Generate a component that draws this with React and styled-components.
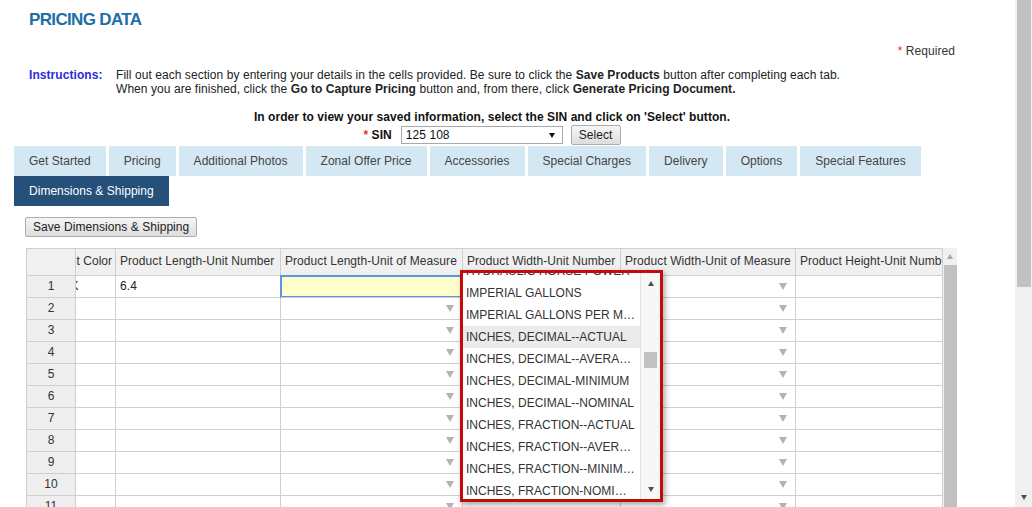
import React, { useLayoutEffect, useRef } from 'react'
import styled, { createGlobalStyle } from 'styled-components'

const GlobalStyle = createGlobalStyle`
  html, body {
    margin: 0;
    padding: 0;
    overflow: hidden;
  }
  body {
    font-family: 'Liberation Sans', Arial, sans-serif;
    font-size: 12px;
    letter-spacing: 0.06px;
    color: #222;
    background: #fff;
  }
  * { box-sizing: border-box; }
`

const tabs = [
  'Get Started',
  'Pricing',
  'Additional Photos',
  'Zonal Offer Price',
  'Accessories',
  'Special Charges',
  'Delivery',
  'Options',
  'Special Features',
  'Dimensions & Shipping',
]

const units = [
  'HYDRAULIC HORSE POWER',
  'IMPERIAL GALLONS',
  'IMPERIAL GALLONS PER MINUTE',
  'INCHES, DECIMAL--ACTUAL',
  'INCHES, DECIMAL--AVERAGE',
  'INCHES, DECIMAL-MINIMUM',
  'INCHES, DECIMAL--NOMINAL',
  'INCHES, FRACTION--ACTUAL',
  'INCHES, FRACTION--AVERAGE',
  'INCHES, FRACTION--MINIMUM',
  'INCHES, FRACTION-NOMINAL',
  'KILOGRAMS',
]

const rows = [
  { color: 'BLACK', length: '6.4' },
  ...Array.from({ length: 11 }, () => ({ color: '', length: '' })),
]

function App() {
  const listRef = useRef(null)

  // the unit list is opened scrolled a little way down
  useLayoutEffect(() => {
    if (listRef.current) listRef.current.scrollTop = 13
  }, [])

  return (
    <>
      <GlobalStyle />
      <Page>
        <Main>
          <Title>PRICING DATA</Title>
          <Required><Star>*</Star> Required</Required>

          <Instructions>
            <Label>Instructions:</Label>
            <div>
              Fill out each section by entering your details in the cells provided. Be sure to click the <b>Save Products</b> button after completing each tab.
              <br />
              When you are finished, click the <b>Go to Capture Pricing</b> button and, from there, click <b>Generate Pricing Document.</b>
            </div>
          </Instructions>

          <Notice>In order to view your saved information, select the SIN and click on 'Select' button.</Notice>
          <SinRow>
            <SinLabel><Star>*</Star> SIN</SinLabel>
            <FakeSelect>
              <span>125 108</span>
              <Caret $color="#111" />
            </FakeSelect>
            <Button>Select</Button>
          </SinRow>

          <Tabs>
            {tabs.map((t) => (
              <Tab key={t} $active={t === 'Dimensions & Shipping'}>{t}</Tab>
            ))}
          </Tabs>

          <SaveButton>Save Dimensions &amp; Shipping</SaveButton>

          <GridWrap>
            <Table>
              <HeadCell $corner />
              <HeadCell><Clip $offset={42}>Product Color</Clip></HeadCell>
              <HeadCell>Product Length-Unit Number</HeadCell>
              <HeadCell>Product Length-Unit of Measure</HeadCell>
              <HeadCell>Product Width-Unit Number</HeadCell>
              <HeadCell>Product Width-Unit of Measure</HeadCell>
              <HeadCell>Product Height-Unit Number</HeadCell>

              {rows.map((r, i) => (
                <React.Fragment key={i}>
                  <RowHead>{i + 1}</RowHead>
                  <Cell><Clip $offset={41}>{r.color}</Clip></Cell>
                  <Cell>{r.length}</Cell>
                  {i === 0 ? (
                    <Cell $selected />
                  ) : (
                    <UomCell><Caret $big $color="#b3b3b3" /></UomCell>
                  )}
                  <Cell />
                  <UomCell><Caret $big $color="#b3b3b3" /></UomCell>
                  <Cell />
                </React.Fragment>
              ))}
            </Table>

            <GridScroll>
              <GridScrollHead><Caret $up $color="#a8a8a8" /></GridScrollHead>
              <GridThumb />
            </GridScroll>

            <Dropdown>
              <OptionList ref={listRef}>
                {units.map((u) => (
                  <Option key={u} $hover={u === 'INCHES, DECIMAL--ACTUAL'}>{u}</Option>
                ))}
              </OptionList>
              <ListScroll>
                <ScrollButton><Caret $up $color="#505050" /></ScrollButton>
                <ListTrack>
                  <ListThumb />
                </ListTrack>
                <ScrollButton><Caret $color="#505050" /></ScrollButton>
              </ListScroll>
            </Dropdown>
          </GridWrap>
        </Main>

        <PageScroll>
          <PageThumb />
          <PageTrackRest />
          <PageArrow><Caret $color="#505050" /></PageArrow>
        </PageScroll>
      </Page>
    </>
  )
}

export default App

const Page = styled.div`
  display: flex;
  height: 100vh;
  overflow: hidden;
`

const Main = styled.main`
  flex: 1;
  min-width: 0;
  padding: 0 45px 0 14px;
  overflow: hidden;
`

const Title = styled.h1`
  margin: 10px 0 0 15px;
  font-size: 17px;
  line-height: 20px;
  letter-spacing: -0.65px;
  font-weight: bold;
  color: #1d6fa5;
`

const Star = styled.span`
  color: #e63030;
`

const Required = styled.div`
  margin-top: 14px;
  padding-right: 15px;
  text-align: right;
  line-height: 14px;
  color: #333;
`

const Instructions = styled.div`
  display: grid;
  grid-template-columns: 87px 1fr;
  margin-top: 10px;
  padding-left: 15px;
  line-height: 14px;
  color: #222;
`

const Label = styled.div`
  font-weight: bold;
  color: #2b2bd9;
`

const Notice = styled.div`
  margin-top: 14px;
  text-align: center;
  font-weight: bold;
  line-height: 14px;
  color: #111;
`

const SinRow = styled.div`
  display: flex;
  justify-content: center;
  align-items: center;
  height: 20px;
  margin-top: 1px;
`

const SinLabel = styled.span`
  font-weight: bold;
  margin-right: 9px;
  color: #111;
`

const FakeSelect = styled.div`
  display: flex;
  align-items: center;
  justify-content: space-between;
  width: 162px;
  height: 18px;
  padding: 0 7px 0 4px;
  border: 1px solid #a9a9a9;
  background: #fff;
  color: #111;
  margin-right: 8px;
`

const Button = styled.button`
  height: 20px;
  padding: 0 7px;
  font-family: inherit;
  font-size: 12px;
  letter-spacing: 0.06px;
  color: #222;
  border: 1px solid #adadad;
  border-radius: 2px;
  background: linear-gradient(#f6f6f6, #dddddd);
`

const Caret = styled.span`
  display: inline-block;
  width: 0;
  height: 0;
  border-left: ${(p) => (p.$big ? 4 : 3.5)}px solid transparent;
  border-right: ${(p) => (p.$big ? 4 : 3.5)}px solid transparent;
  ${(p) =>
    p.$up
      ? `border-bottom: 5px solid ${p.$color};`
      : `border-top: ${p.$big ? 7 : 5}px solid ${p.$color};`}
`

const Tabs = styled.div`
  display: flex;
  flex-wrap: wrap;
  column-gap: 3px;
  margin-top: 1px;
`

const Tab = styled.div`
  height: 30px;
  line-height: 30px;
  padding: 0 15px;
  white-space: nowrap;
  letter-spacing: 0.03px;
  background: ${(p) => (p.$active ? '#24507a' : '#d4e8f4')};
  color: ${(p) => (p.$active ? '#fff' : '#444')};
`

const SaveButton = styled(Button)`
  display: block;
  margin: 11px 0 0 11px;
`

const GridWrap = styled.div`
  position: relative;
  display: flex;
  width: 931px;
  margin: 11px 0 0 12px;
`

const Table = styled.div`
  display: grid;
  grid-template-columns: 49px 40px 165px 182px 158px 175px 147px;
  border-top: 1px solid #cfcfcf;
  border-left: 1px solid #cfcfcf;
  color: #222;
`

const HeadCell = styled.div`
  height: 27px;
  line-height: 25px;
  padding: 0 4px;
  white-space: nowrap;
  overflow: hidden;
  background: #f0f0f0;
  border-right: 1px solid #cfcfcf;
  border-bottom: 1px solid #cfcfcf;
  color: #333;
`

const RowHead = styled.div`
  height: 22px;
  line-height: 21px;
  text-align: center;
  background: #eeeeee;
  border-right: 1px solid #cfcfcf;
  border-bottom: 1px solid #cfcfcf;
  color: #333;
`

const Cell = styled.div`
  height: 22px;
  line-height: 21px;
  padding: 0 4px;
  white-space: nowrap;
  overflow: hidden;
  background: ${(p) => (p.$selected ? '#ffffcc' : '#fff')};
  border-right: 1px solid #cfcfcf;
  border-bottom: 1px solid #cfcfcf;
  box-shadow: ${(p) => (p.$selected ? '0 0 0 1px #5a95e8, inset 0 0 0 1px #5a95e8' : 'none')};
`

const UomCell = styled(Cell)`
  display: flex;
  justify-content: flex-end;
  align-items: center;
  padding-right: 8px;
`

const Clip = styled.span`
  display: block;
  margin-left: -${(p) => p.$offset}px;
`

const GridScroll = styled.div`
  display: flex;
  flex-direction: column;
  width: 15px;
  background: #f0f0f0;
`

const GridScrollHead = styled.div`
  display: flex;
  justify-content: center;
  align-items: center;
  height: 17px;
`

const GridThumb = styled.div`
  flex: 1;
  margin-left: 1px;
  background: #c1c1c1;
`

const Dropdown = styled.div`
  position: absolute;
  left: 434px;
  top: 22px;
  width: 203px;
  height: 232px;
  display: flex;
  border: 3px solid #c40b0b;
  background: #fff;
  box-shadow: 2px 3px 6px rgba(0, 0, 0, 0.35);
`

const OptionList = styled.div`
  flex: 1;
  min-width: 0;
  overflow: hidden;
`

const Option = styled.div`
  height: 22px;
  line-height: 22px;
  padding: 0 5px 0 3px;
  white-space: nowrap;
  overflow: hidden;
  text-overflow: ellipsis;
  letter-spacing: 0;
  color: #333;
  background: ${(p) => (p.$hover ? '#ebebeb' : '#fff')};
`

const ListScroll = styled.div`
  display: flex;
  flex-direction: column;
  width: 20px;
  background: #f7f7f7;
  border-left: 1px solid #e2e2e2;
`

const ScrollButton = styled.div`
  display: flex;
  justify-content: center;
  align-items: center;
  height: 20px;
`

const ListTrack = styled.div`
  flex: 1;
  padding-top: 59px;
`

const ListThumb = styled.div`
  width: 13px;
  height: 16px;
  margin-left: 3px;
  background: #c1c1c1;
`

const PageScroll = styled.div`
  display: flex;
  flex-direction: column;
  width: 17px;
  background: #f0f0f0;
`

const PageThumb = styled.div`
  height: 287px;
  width: 14px;
  margin-left: 2px;
  background: #c1c1c1;
`

const PageTrackRest = styled.div`
  flex: 1;
`

const PageArrow = styled.div`
  display: flex;
  justify-content: center;
  align-items: center;
  height: 20px;
`
